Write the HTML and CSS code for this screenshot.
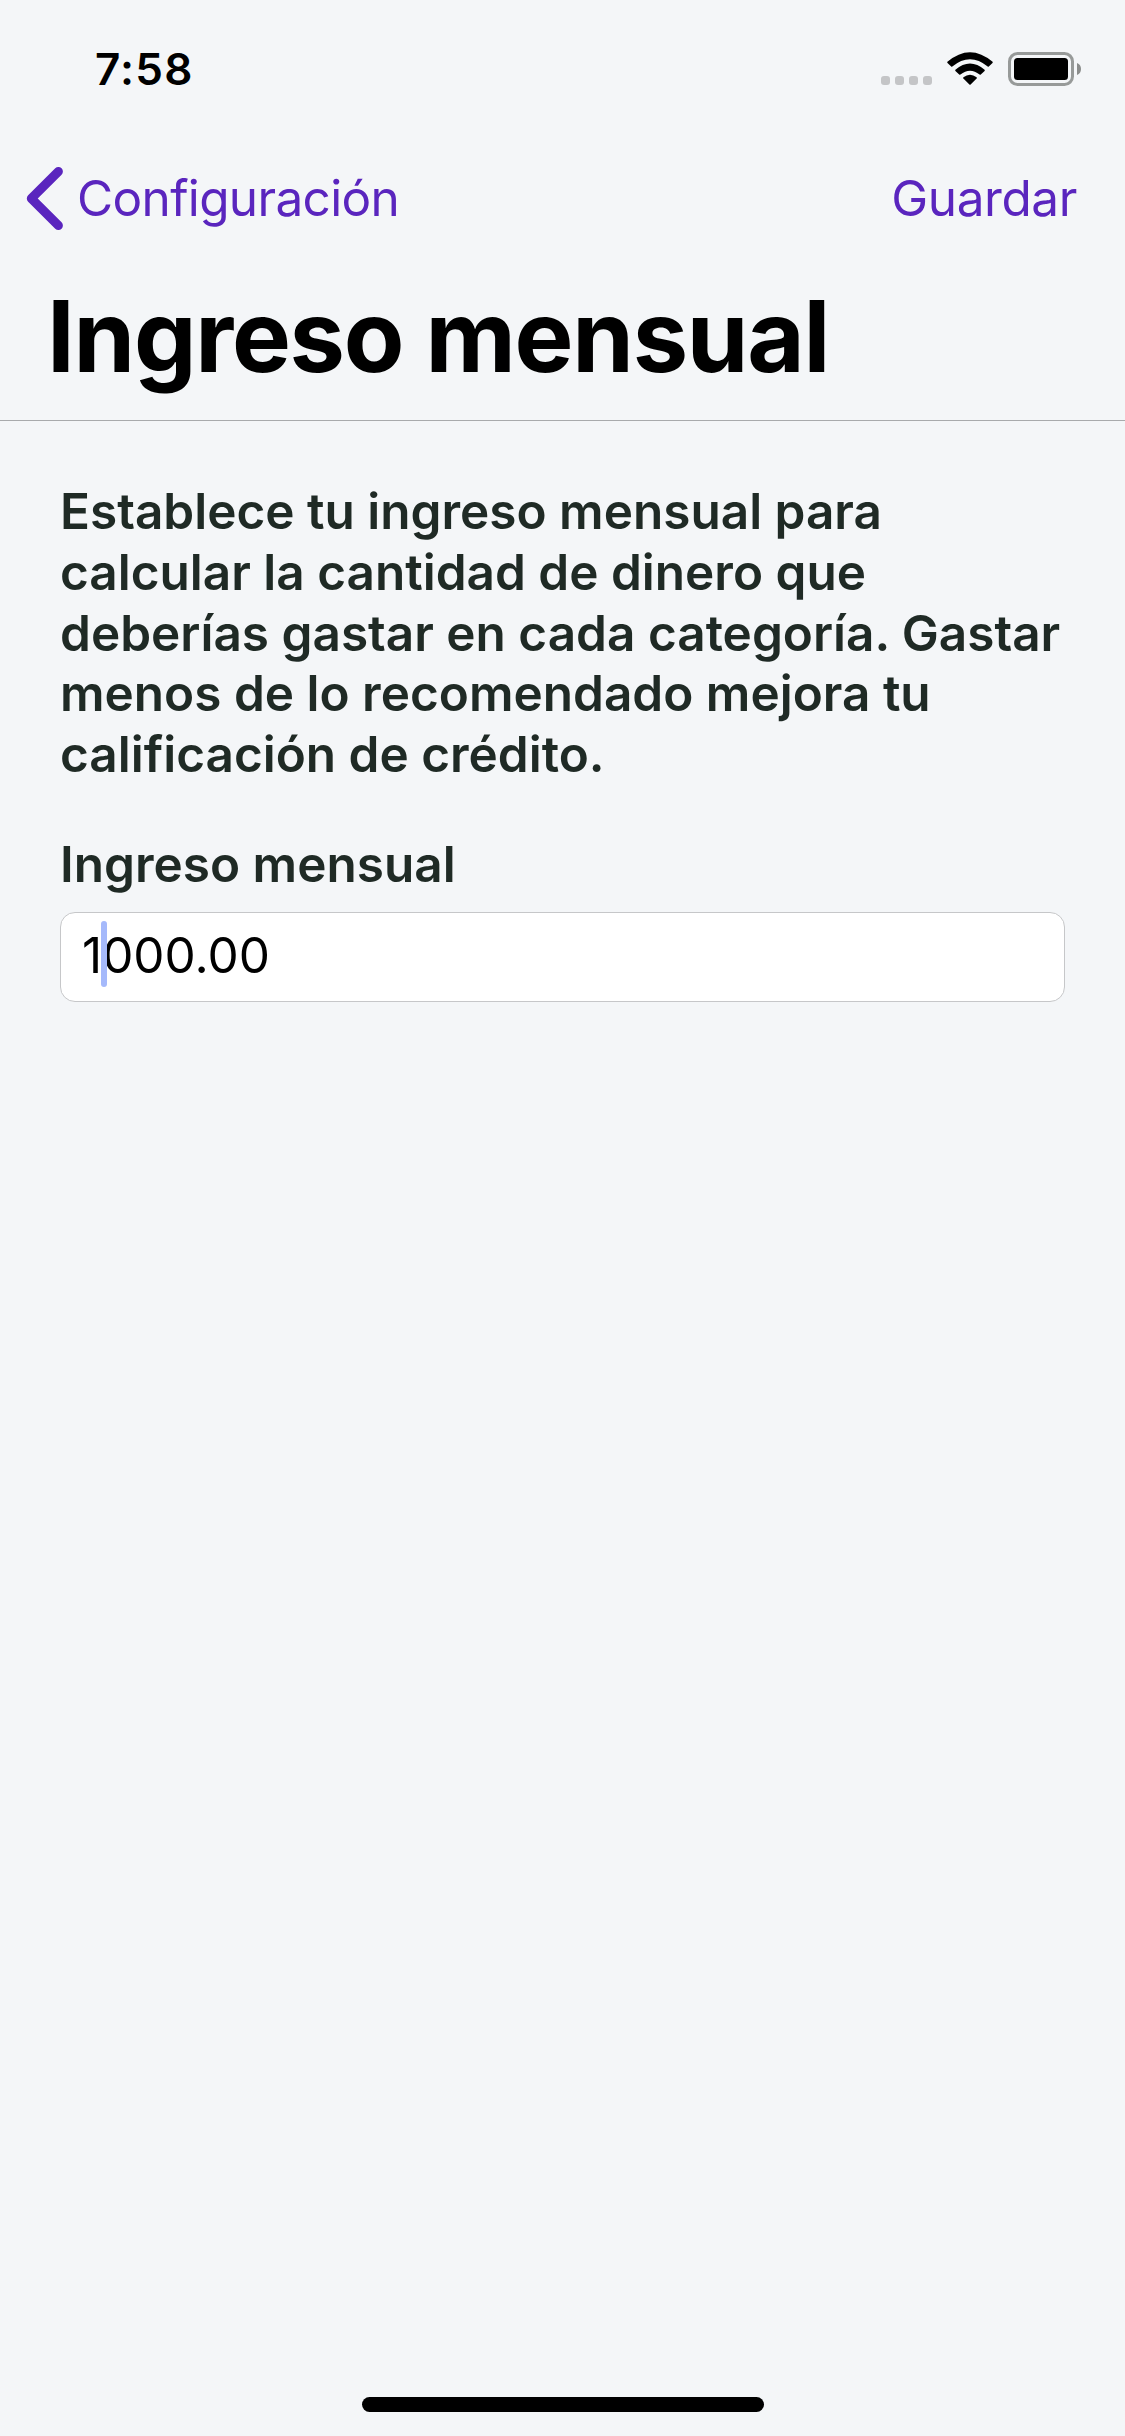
FILE: index.html
```html
<!DOCTYPE html>
<html lang="es">
<head>
<meta charset="utf-8">
<title>Ingreso mensual</title>
<link rel="stylesheet" href="styles.css">
</head>
<body>
<div class="screen">
  <header class="header">
    <div class="status">
      <span class="time">7:58</span>
      <div class="indicators">
        <div class="signal"><i></i><i></i><i></i><i></i></div>
        <svg class="wifi" width="46" height="34" viewBox="0 0 46 34">
          <path d="M0.4 9.8 Q23-9.4 45.6 9.8 Q46 10.4 45.5 11 L41.8 14.6 Q41.2 15 40.7 14.6 Q23 0 5.3 14.6 Q4.8 15 4.2 14.6 L0.5 11 Q0 10.4 0.4 9.8Z"/>
          <path d="M8.4 17.8 Q23 5 37.6 17.8 Q38.1 18.4 37.6 19 L33.8 22.6 Q33.2 23 32.6 22.6 Q23 14.8 13.4 22.6 Q12.8 23 12.2 22.6 L8.4 19 Q7.9 18.4 8.4 17.8Z"/>
          <path d="M16.4 25.3 Q23 20.1 29.6 25.3 Q30 25.9 29.6 26.5 L23.6 32.5 Q23 33 22.4 32.5 L16.4 26.5 Q16 25.9 16.4 25.3Z"/>
        </svg>
        <svg class="battery" width="74" height="34" viewBox="0 0 74 34">
          <rect x="1.5" y="1.5" width="63" height="31" rx="8" fill="none" stroke="#979a99" stroke-width="3"/>
          <rect x="6" y="6" width="54" height="22" rx="3.5"/>
          <path d="M69 11 Q73 12.5 73 17 Q73 21.5 69 23Z" fill="#8b8d8c"/>
        </svg>
      </div>
    </div>
    <nav class="nav">
      <a class="back">
        <svg width="37" height="64" viewBox="0 0 37 64"><path d="M32.4 5.5 L5.3 32.5 L32.4 59.5" fill="none" stroke="#5a25be" stroke-width="9" stroke-linecap="round" stroke-linejoin="round"/></svg>
        <span class="back-text">Configuración</span>
      </a>
      <a class="save">Guardar</a>
    </nav>
    <h1 class="title">Ingreso mensual</h1>
  </header>
  <main class="content">
    <p class="intro">Establece tu ingreso mensual para<br>calcular la cantidad de dinero que<br>deberías gastar en cada categoría. Gastar<br>menos de lo recomendado mejora tu<br>calificación de crédito.</p>
    <div class="label">Ingreso mensual</div>
    <div class="field"><span class="value">1<span class="caret"></span>000.00</span></div>
  </main>
  <div class="home"></div>
</div>
</body>
</html>
```
FILE: styles.css
```css
* { box-sizing: border-box; }
body {
  margin: 0;
  background: #f4f6f8;
  font-family: Inter, "Liberation Sans", sans-serif;
  font-size: 49.5px;
  color: #000;
}
.screen {
  width: 1125px;
  height: 2436px;
  display: flex;
  flex-direction: column;
}
.header {
  height: 421px;
  border-bottom: 1px solid #a8aaac;
}
.status {
  height: 132px;
  padding: 6px 43px 0 95px;
  display: flex;
  justify-content: space-between;
  align-items: center;
}
.time {
  font-size: 44px;
  font-weight: 600;
  letter-spacing: 1.2px;
}
.indicators {
  display: flex;
  height: 34px;
  align-items: flex-end;
}
.signal {
  display: flex;
  gap: 5px;
  margin: 0 15px 1px 0;
}
.signal i {
  width: 9px;
  height: 9px;
  border-radius: 3px;
  background: #c4c5c7;
}
.wifi { margin-right: 15px; }
.nav {
  height: 132px;
  padding: 0 48px 0 26px;
  display: flex;
  justify-content: space-between;
  align-items: center;
  color: #5a25be;
}
.back {
  display: flex;
  align-items: center;
  gap: 14px;
}
.back-text { letter-spacing: -0.65px; }
.save { letter-spacing: -0.4px; }
.title {
  margin: 12px 0 0 47px;
  font-size: 99px;
  line-height: 120px;
  font-weight: 700;
  letter-spacing: -1.25px;
}
.content {
  flex: 1;
  padding: 60px 60px 0;
}
.intro {
  margin: 0;
  color: #1f2a25;
  font-weight: 600;
  line-height: 60.8px;
  white-space: nowrap;
}
.label {
  margin-top: 49px;
  color: #1f2a25;
  font-weight: 600;
  line-height: 60px;
}
.field {
  margin-top: 18px;
  width: 1005px;
  height: 90px;
  padding: 0 20px 4px 21px;
  display: flex;
  align-items: center;
  border: 1px solid #c6c7c9;
  border-radius: 15px;
  background: #fff;
}
.value {
  position: relative;
}
.caret {
  position: absolute;
  top: -4px;
  left: 19px;
  width: 6px;
  height: 66px;
  border-radius: 3px;
  background: #a5b9fb;
}
.home {
  width: 402px;
  height: 15px;
  margin: 0 auto 24px;
  border-radius: 8px;
  background: #000;
}
```
